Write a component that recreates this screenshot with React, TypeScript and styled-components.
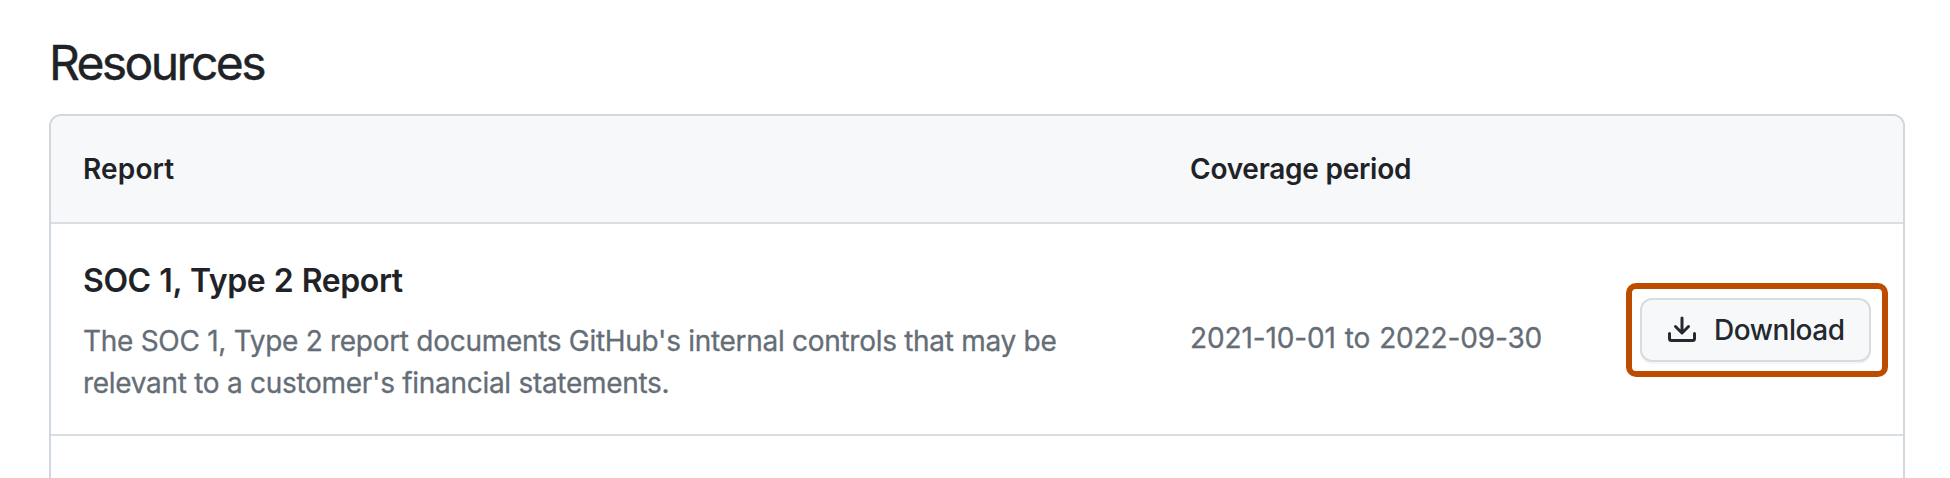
import React from "react";
import styled, { createGlobalStyle } from "styled-components";

const GlobalStyle = createGlobalStyle`
  *, *::before, *::after { box-sizing: border-box; }
  body {
    margin: 0;
    background: #fff;
    color: #1f2328;
    font-family: Inter, "Liberation Sans", sans-serif;
    font-size: 28px;
    overflow: hidden;
  }
`;

const Page = styled.main`
  height: 478px;
  padding: 33px 45px 0 49px;
  overflow: hidden;
`;

const Heading = styled.h1`
  margin: 0 0 21px;
  font-size: 48px;
  line-height: 60px;
  font-weight: 400;
  letter-spacing: -2.65px;
  -webkit-text-stroke: 0.4px currentColor;
`;

const Table = styled.section`
  height: 420px;
  border: 2px solid #d0d7de;
  border-radius: 12px;
  overflow: hidden;
`;

const Row = styled.div`
  display: grid;
  grid-template-columns: 1107px 436px 262px;
  padding-left: 32px;
  border-bottom: 2px solid #d8dee4;
`;

const HeaderRow = styled(Row)`
  height: 108px;
  align-items: center;
  background: #f6f8fa;
`;

const ReportRow = styled(Row)`
  height: 212px;
`;

const ColumnTitle = styled.div<{ $spacing: number }>`
  font-weight: 600;
  line-height: 42px;
  letter-spacing: ${(p) => p.$spacing}px;
`;

const ReportInfo = styled.div`
  padding-top: 33px;
`;

const ReportTitle = styled.h2`
  margin: 0;
  font-size: 32px;
  line-height: 48px;
  font-weight: 600;
  letter-spacing: -0.4px;
  word-spacing: 0.8px;
`;

const Description = styled.p`
  width: 1000px;
  margin: 15px 0 0;
  color: #656d76;
  line-height: 42px;
  letter-spacing: -0.29px;
  -webkit-text-stroke: 0.3px currentColor;
`;

const Period = styled.div`
  padding-top: 93px;
  color: #656d76;
  line-height: 42px;
  letter-spacing: -0.14px;
  word-spacing: 1.3px;
  white-space: nowrap;
  -webkit-text-stroke: 0.3px currentColor;
`;

const Highlight = styled.div`
  height: 94px;
  margin-top: 59px;
  padding: 9px 11px 9px 8px;
  border: 6px solid #bc4c00;
  border-radius: 10px;
`;

const DownloadButton = styled.button`
  display: flex;
  align-items: center;
  width: 231px;
  height: 64px;
  padding: 0 0 0 24px;
  gap: 16px;
  border: 2px solid #d8dcdf;
  border-radius: 12px;
  background: #f6f8fa;
  box-shadow: 0 2px 0 rgba(31, 35, 40, 0.04);
  color: #24292f;
  font: inherit;
  font-weight: 500;
  letter-spacing: -0.45px;
`;

const DownloadIcon = () => (
  <svg width="32" height="32" viewBox="0 0 16 16" fill="currentColor" aria-hidden="true">
    <path d="M2.75 14A1.75 1.75 0 0 1 1 12.25v-2.5a.75.75 0 0 1 1.5 0v2.5c0 .138.112.25.25.25h10.5a.25.25 0 0 0 .25-.25v-2.5a.75.75 0 0 1 1.5 0v2.5A1.75 1.75 0 0 1 13.25 14Z" />
    <path d="M7.25 7.689V2a.75.75 0 0 1 1.5 0v5.689l1.97-1.969a.749.749 0 1 1 1.06 1.06l-3.25 3.25a.749.749 0 0 1-1.06 0L4.22 6.78a.749.749 0 1 1 1.06-1.06l1.97 1.969Z" />
  </svg>
);

export default function App() {
  return (
    <>
      <GlobalStyle />
      <Page>
        <Heading>Resources</Heading>
        <Table>
          <HeaderRow>
            <ColumnTitle $spacing={0.15}>Report</ColumnTitle>
            <ColumnTitle $spacing={-0.25}>Coverage period</ColumnTitle>
          </HeaderRow>
          <ReportRow>
            <ReportInfo>
              <ReportTitle>SOC 1, Type 2 Report</ReportTitle>
              <Description>
                The SOC 1, Type 2 report documents GitHub's internal controls that may be
                <br />
                relevant to a customer's financial statements.
              </Description>
            </ReportInfo>
            <Period>2021-10-01 to 2022-09-30</Period>
            <Highlight>
              <DownloadButton type="button">
                <DownloadIcon />
                Download
              </DownloadButton>
            </Highlight>
          </ReportRow>
        </Table>
      </Page>
    </>
  );
}
